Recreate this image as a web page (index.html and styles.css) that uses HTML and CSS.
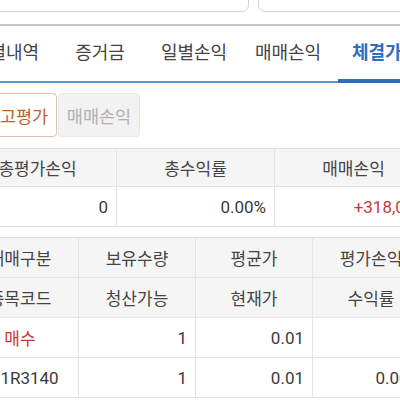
FILE: index.html
```html
<!DOCTYPE html>
<html lang="ko">
<head>
<meta charset="utf-8">
<link rel="stylesheet" href="styles.css">
</head>
<body>
<div class="page">
  <div class="top-inputs">
    <div class="box box-left"></div>
    <div class="box box-right"></div>
  </div>
  <div class="rule"></div>
  <div class="tabs">
    <div class="tab">체결내역</div>
    <div class="tab">증거금</div>
    <div class="tab">일별손익</div>
    <div class="tab">매매손익</div>
    <div class="tab active">체결가능</div>
  </div>
  <div class="subtabs">
    <div class="sub sub-on">잔고평가</div>
    <div class="sub sub-off">매매손익</div>
  </div>
  <div class="summary">
    <div class="cell head">총평가손익</div>
    <div class="cell head">총수익률</div>
    <div class="cell head">매매손익</div>
    <div class="cell num">0</div>
    <div class="cell num">0.00%</div>
    <div class="cell num red">+318,000</div>
  </div>
  <div class="detail">
    <div class="cell head">매매구분</div>
    <div class="cell head">보유수량</div>
    <div class="cell head">평균가</div>
    <div class="cell head">평가손익</div>
    <div class="cell head">종목코드</div>
    <div class="cell head">청산가능</div>
    <div class="cell head">현재가</div>
    <div class="cell head">수익률</div>
    <div class="cell ctr red">매수</div>
    <div class="cell num">1</div>
    <div class="cell num">0.01</div>
    <div class="cell num"></div>
    <div class="cell ctr">201R3140</div>
    <div class="cell num">1</div>
    <div class="cell num">0.01</div>
    <div class="cell num">0.00%</div>
  </div>
</div>
</body>
</html>
```

FILE: styles.css
```css
html, body {
  margin: 0;
  padding: 0;
  background: #fff;
  overflow: hidden;
}
body {
  width: 400px;
  height: 400px;
  font-family: Roboto, "Noto Sans CJK KR", sans-serif;
  color: #3a3a3a;
}
.page {
  margin-left: -41px;
  width: 480px;
}
.top-inputs {
  display: flex;
  gap: 9px;
  margin-top: -12px;
  height: 24px;
}
.box {
  border: 1px solid #d4d4d4;
  border-radius: 7px;
  box-sizing: border-box;
  background: #fff;
}
.box-left { width: 290px; }
.box-right { flex: 1; }
.rule {
  margin-top: 12px;
  height: 2px;
  background: #c6c6c6;
}
.tabs {
  display: flex;
  height: 55px;
  border-bottom: 2px solid #5d8fd3;
}
.tab {
  width: 94px;
  display: flex;
  align-items: center;
  justify-content: center;
  font-size: 18px;
  color: #444;
  padding-bottom: 5px;
  box-sizing: border-box;
  position: relative;
  white-space: nowrap;
}
.tab.active {
  color: #2f6dc1;
  font-weight: 700;
  margin-left: 3px;
}
.tab.active::after {
  content: "";
  position: absolute;
  left: 0;
  right: -20px;
  bottom: -2px;
  height: 4px;
  background: #2f6dc1;
}
.subtabs {
  display: flex;
  gap: 1px;
  margin-top: 10px;
  margin-left: 16px;
}
.sub {
  width: 82px;
  height: 44px;
  box-sizing: border-box;
  display: flex;
  align-items: center;
  justify-content: center;
  font-size: 17.5px;
  border-radius: 4px;
  white-space: nowrap;
}
.sub-on {
  border: 1px solid #dfbfae;
  color: #bf5f2c;
  background: #fff;
}
.sub-off {
  border: 1px solid #e8e8e8;
  background: #f2f2f2;
  color: #b0b0b0;
}
.summary {
  display: grid;
  grid-template-columns: 158px 158px 158px;
  margin-top: 11px;
  border-top: 1px solid #dedede;
  border-bottom: 1px solid #dedede;
  width: 474px;
}
.summary .head { height: 38px; }
.summary .cell:nth-child(n+4) { height: 39px; border-bottom: none; }
.detail {
  display: grid;
  grid-template-columns: 117px 117px 117px 117px;
  margin-top: 10px;
  margin-left: 3px;
  border-top: 1px solid #dedede;
  width: 468px;
}
.detail .cell { height: 40px; }
.cell {
  box-sizing: border-box;
  display: flex;
  align-items: center;
  border-right: 1px solid #e4e4e4;
  border-bottom: 1px solid #e4e4e4;
  font-size: 17px;
  white-space: nowrap;
}
.head {
  justify-content: center;
  background: #f5f5f5;
  font-size: 17px;
  color: #444;
}
.num {
  justify-content: flex-end;
  padding-right: 8px;
  color: #3a3a3a;
}
.ctr {
  justify-content: center;
}
.cell.red { color: #c73a3a; }
```
